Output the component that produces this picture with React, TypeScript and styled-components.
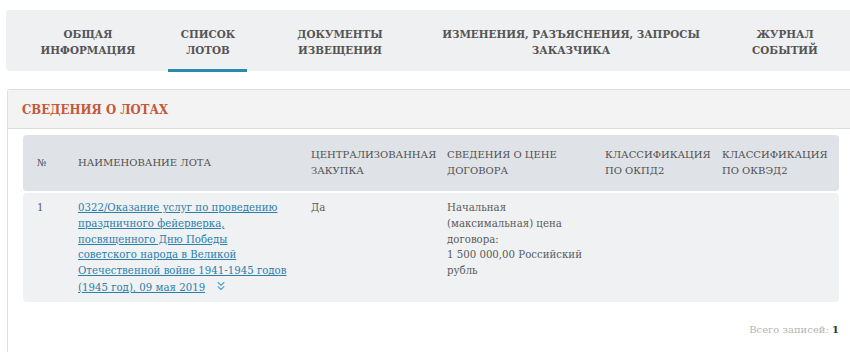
import React from "react"
import styled, { createGlobalStyle } from "styled-components"
import { ChevronsDown } from "lucide-react"

const Global = createGlobalStyle`
    html, body {
        margin: 0;
        padding: 0;
        background: #fff;
        overflow: hidden;
    }
    body {
        font-family: "DejaVu Serif", "Liberation Serif", serif;
        color: #555;
    }
`

const condensed = `
    font-family: "DejaVu Serif Condensed", "DejaVu Serif", serif;
    font-stretch: condensed;
`

const Page = styled.div`
    width: 850px;
    height: 352px;
    padding-top: 10px;
    box-sizing: border-box;
`

const TabBar = styled.nav`
    display: flex;
    margin-left: 6px;
    margin-right: -20px;
    height: 61px;
    padding-left: 22px;
    background: #eff0f2;
    border-radius: 4px 0 0 4px;
`

const Tab = styled.div<{ $w: number; $active?: boolean }>`
    position: relative;
    width: ${p => p.$w}px;
    display: flex;
    align-items: center;
    justify-content: center;
    padding-top: 2px;
    box-sizing: border-box;
    text-align: center;
    ${condensed}
    font-size: 11.5px;
    font-weight: 700;
    line-height: 16px;
    color: #555;
    text-transform: uppercase;
    &::after {
        content: "";
        display: ${p => (p.$active ? "block" : "none")};
        position: absolute;
        left: 50%;
        bottom: -1px;
        width: 79px;
        height: 3px;
        margin-left: -40px;
        background: #2a8aae;
    }
`

const Panel = styled.section`
    margin: 18px -20px 0 7px;
    border: 1px solid #dedede;
    border-right: none;
    border-radius: 3px 0 0 0;
    height: 262px;
`

const PanelHead = styled.header`
    height: 38px;
    display: flex;
    align-items: center;
    padding-left: 14px;
    background: #f3f3f3;
    border-bottom: 1px solid #dcdcdc;
`

const Title = styled.h2`
    margin: 0;
    ${condensed}
    font-size: 13px;
    font-weight: 700;
    color: #c4583a;
`

const Body = styled.div`
    padding: 6px 0 0 15px;
    width: 816px;
`

const Cols = "41px 233px 136px 158px 117px 130px"

const HeadRow = styled.div`
    display: grid;
    grid-template-columns: ${Cols};
    align-items: center;
    height: 56px;
    background: #dfe2e6;
    border-radius: 4px;
`

const HeadCell = styled.div`
    padding-left: 14px;
    font-size: 10px;
    line-height: 16px;
    color: #505050;
    text-transform: uppercase;
`

const DataRow = styled.div`
    display: grid;
    grid-template-columns: ${Cols};
    align-items: start;
    margin-top: 2px;
    height: 109px;
    padding-top: 7px;
    box-sizing: border-box;
    background: #eff1f3;
    border-radius: 4px;
`

const Cell = styled.div`
    padding-left: 14px;
    padding-right: 4px;
    font-size: 10.2px;
    line-height: 15.8px;
    color: #5c5c5c;
`

const LotLink = styled.a`
    color: #2b7fab;
    text-decoration: underline;
    cursor: pointer;
`

const Expand = styled.span`
    display: inline-flex;
    vertical-align: -2px;
    margin-left: 9px;
    color: #4aa2d0;
`

const Total = styled.div`
    margin-top: 22px;
    text-align: right;
    font-size: 10px;
    color: #b4b4b4;
    b {
        color: #333;
    }
`

const tabs = [
    { w: 120, label: ["Общая", "информация"] },
    { w: 120, label: ["Список", "лотов"], active: true },
    { w: 144, label: ["Документы", "извещения"] },
    { w: 318, label: ["Изменения, разъяснения, запросы", "заказчика"] },
    { w: 110, label: ["Журнал", "событий"] },
]

const lotLines = [
    "0322/Оказание услуг по проведению",
    "праздничного фейерверка,",
    "посвященного Дню Победы",
    "советского народа в Великой",
    "Отечественной войне 1941-1945 годов",
    "(1945 год), 09 мая 2019",
]

const App = () => {
    return (
        <Page>
            <Global />
            <TabBar>
                {tabs.map(t => (
                    <Tab key={t.label[0]} $w={t.w} $active={t.active}>
                        <span>
                            {t.label[0]}
                            <br />
                            {t.label[1]}
                        </span>
                    </Tab>
                ))}
            </TabBar>
            <Panel>
                <PanelHead>
                    <Title>СВЕДЕНИЯ О ЛОТАХ</Title>
                </PanelHead>
                <Body>
                    <HeadRow>
                        <HeadCell>№</HeadCell>
                        <HeadCell>Наименование лота</HeadCell>
                        <HeadCell>Централизованная закупка</HeadCell>
                        <HeadCell>Сведения о цене договора</HeadCell>
                        <HeadCell>Классификация по ОКПД2</HeadCell>
                        <HeadCell>Классификация по ОКВЭД2</HeadCell>
                    </HeadRow>
                    <DataRow>
                        <Cell>1</Cell>
                        <Cell>
                            <LotLink>
                                {lotLines.map((l, i) => (
                                    <React.Fragment key={i}>
                                        {i > 0 && <br />}
                                        {l}
                                    </React.Fragment>
                                ))}
                            </LotLink>
                            <Expand>
                                <ChevronsDown size={14} strokeWidth={2} />
                            </Expand>
                        </Cell>
                        <Cell>Да</Cell>
                        <Cell>
                            Начальная (максимальная) цена договора:
                            <br />
                            1 500 000,00 Российский рубль
                        </Cell>
                        <Cell />
                        <Cell />
                    </DataRow>
                    <Total>
                        Всего записей: <b>1</b>
                    </Total>
                </Body>
            </Panel>
        </Page>
    )
}

export default App
